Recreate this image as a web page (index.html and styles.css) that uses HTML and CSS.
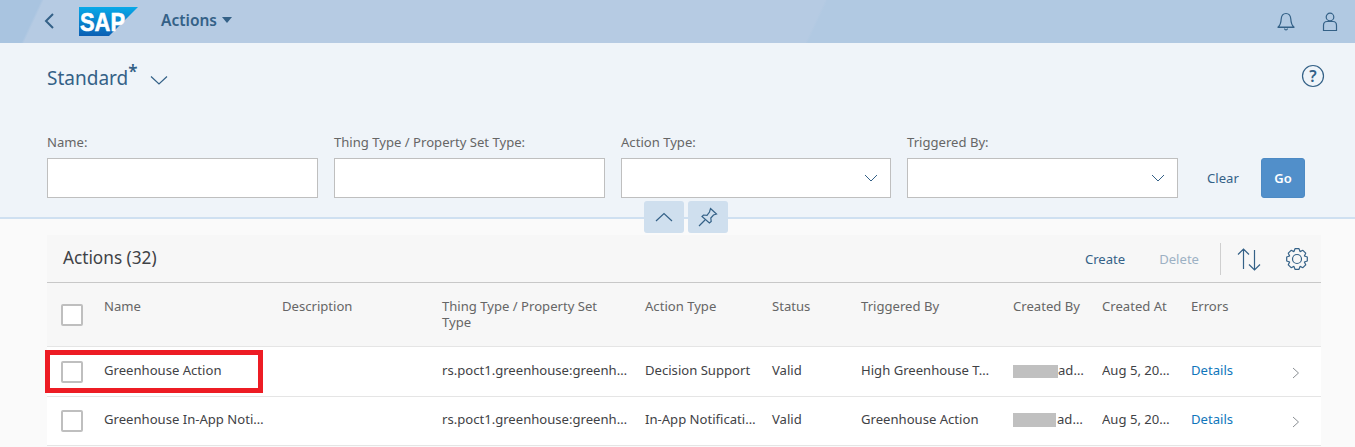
FILE: index.html
```html
<!DOCTYPE html>
<html lang="en">

<head>
  <meta charset="utf-8">
  <title>Actions</title>
  <link rel="stylesheet" href="styles.css">
</head>

<body>
  <header class="shell">
    <button class="back" aria-label="Back">
      <svg width="12" height="18" viewBox="0 0 12 18"><path d="M10 2 3 9l7 7" class="line thick"/></svg>
    </button>
    <svg class="logo" width="59" height="29" viewBox="0 0 59 29">
      <defs>
        <linearGradient id="sapBlue" x1="0" y1="0" x2="0" y2="1">
          <stop offset="0" stop-color="#08a9e8"/>
          <stop offset="1" stop-color="#0b5fb3"/>
        </linearGradient>
      </defs>
      <polygon points="0,0 59,0 30,29 0,29" fill="url(#sapBlue)"/>
      <text x="1" y="24" class="logo-text" textLength="45" lengthAdjust="spacingAndGlyphs">SAP</text>
    </svg>
    <div class="app-title">Actions <span class="caret"></span></div>
    <div class="shell-right">
      <svg width="18" height="20" viewBox="0 0 18 20"><path d="M9 1.500c-3.400 0-4.600 2.800-4.800 5.500-.2 3.500-.8 6-3 8h15.600c-2.200-2-2.800-4.500-3-8C13.600 4.300 12.400 1.500 9 1.500ZM1 15.500h16M7.500 16.500c.3 1.800 2.700 1.800 3 0" class="line"/></svg>
      <svg width="16" height="20" viewBox="0 0 16 20"><circle cx="8" cy="5" r="3.800" class="line"/><path d="M1.500 18.500v-5c0-2.500 1.500-4 3.500-4h6c2 0 3.500 1.500 3.500 4v5Z" class="line"/></svg>
    </div>
  </header>

  <section class="filterbar">
    <div class="variant-row">
      <div class="variant">Standard<sup class="star">*</sup>
        <svg class="variant-arrow" width="18" height="10" viewBox="0 0 18 10"><path d="M1 1.500 9 9l8-7.500" class="line"/></svg>
      </div>
      <svg class="help" width="24" height="24" viewBox="0 0 24 24"><circle cx="12" cy="12" r="10.500" class="line"/><text x="12" y="17.500" class="help-text">?</text></svg>
    </div>
    <div class="filters">
      <div class="field">
        <label>Name:</label>
        <div class="input"></div>
      </div>
      <div class="field">
        <label>Thing Type / Property Set Type:</label>
        <div class="input"></div>
      </div>
      <div class="field">
        <label>Action Type:</label>
        <div class="input">
          <svg width="14" height="8" viewBox="0 0 14 8"><path d="M1 1l6 6 6-6" class="line thin"/></svg>
        </div>
      </div>
      <div class="field">
        <label>Triggered By:</label>
        <div class="input">
          <svg width="14" height="8" viewBox="0 0 14 8"><path d="M1 1l6 6 6-6" class="line thin"/></svg>
        </div>
      </div>
      <span class="clear">Clear</span>
      <button class="go">Go</button>
    </div>
    <div class="bar-tools">
      <button class="tool">
        <svg width="18" height="10" viewBox="0 0 18 10"><path d="M1 9l8-7.500L17 9" class="line"/></svg>
      </button>
      <button class="tool">
        <svg width="20" height="20" viewBox="0 0 20 20"><path d="M1 19l6-6M12.500 1.500l6 5.500-3 1-2.700 3 .4 3.500-1.800 1.500L4 9.500 5.500 8l3.500.3L11.500 5Z" class="line"/></svg>
      </button>
    </div>
  </section>

  <main class="content">
    <div class="toolbar">
      <h2>Actions (32)</h2>
      <span class="action">Create</span>
      <span class="action off">Delete</span>
      <span class="sep"></span>
      <svg width="24" height="24" viewBox="0 0 24 24"><path d="M6.500 22V2M1 7.500l5.500-5.500L12 7.500M17.500 3v20M12 17.500l5.500 5.500 5.500-5.500" class="line"/></svg>
      <svg class="gear" width="24" height="24" viewBox="0 0 24 24"><circle cx="12" cy="12" r="4.500" class="line"/><polygon points="22.310,10 22.310,14 19.390,15.060 20.700,17.870 17.870,20.700 15.060,19.390 14,22.310 10,22.310 8.940,19.390 6.130,20.700 3.300,17.870 4.610,15.060 1.690,14 1.690,10 4.610,8.940 3.300,6.130 6.130,3.300 8.940,4.610 10,1.690 14,1.690 15.060,4.610 17.870,3.300 20.700,6.130 19.390,8.940" class="line round"/></svg>
    </div>

    <div class="row head">
      <div class="check-cell"><span class="check"></span></div>
      <div>Name</div>
      <div>Description</div>
      <div>Thing Type / Property Set Type</div>
      <div>Action Type</div>
      <div>Status</div>
      <div>Triggered By</div>
      <div>Created By</div>
      <div>Created At</div>
      <div>Errors</div>
      <div></div>
    </div>

    <div class="row item">
      <div class="check-cell"><span class="check"></span></div>
      <div>Greenhouse Action</div>
      <div></div>
      <div class="cut">rs.poct1.greenhouse:greenhouse</div>
      <div class="cut">Decision Support</div>
      <div>Valid</div>
      <div class="cut trigger">High Greenhouse Temperature</div>
      <div class="cut"><span class="hidden-name"></span>admin@sap.com</div>
      <div class="cut">Aug 5, 2020, 10:14 AM</div>
      <div><a class="link">Details</a></div>
      <div class="chev"><svg width="8" height="12" viewBox="0 0 8 12"><path d="M1 1l5.500 5L1 11" class="line grey"/></svg></div>
    </div>

    <div class="row item">
      <div class="check-cell"><span class="check"></span></div>
      <div class="cut">Greenhouse In-App Notification</div>
      <div></div>
      <div class="cut">rs.poct1.greenhouse:greenhouse</div>
      <div class="cut">In-App Notification</div>
      <div>Valid</div>
      <div class="cut trigger">Greenhouse Action</div>
      <div class="cut"><span class="hidden-name lower"></span>admin@sap.com</div>
      <div class="cut">Aug 5, 2020, 10:14 AM</div>
      <div><a class="link">Details</a></div>
      <div class="chev"><svg width="8" height="12" viewBox="0 0 8 12"><path d="M1 1l5.500 5L1 11" class="line grey"/></svg></div>
    </div>

    <div class="callout"></div>
  </main>
</body>

</html>
```

FILE: styles.css
```css
html,
body {
  margin: 0;
  height: 447px;
  overflow: hidden;
}

body {
  background-color: #fafafa;
  font-family: "Noto Sans", "Open Sans", sans-serif;
  font-size: 13.1px;
  color: #3f4246;
}

button {
  font-family: inherit;
  border: 0;
  padding: 0;
}

.line {
  fill: none;
  stroke: #346187;
  stroke-width: 1.2;
}

.thick {
  stroke-width: 2;
}

.thin {
  stroke-width: 1;
}

.grey {
  stroke: #8a8f94;
  stroke-width: 1;
}

.round {
  stroke-linejoin: round;
}

/* top bar */
.shell {
  height: 43px;
  display: flex;
  align-items: center;
  background: linear-gradient(115deg, #a9c4e0 0, #a9c4e0 3%, #b6cbe3 3.2%, #b6cbe3 60%, #b1c9e2 60.2%);
}

.back {
  background: none;
  margin-left: 42px;
  width: 14px;
  height: 18px;
  margin-top: -1px;
}

.logo {
  margin-left: 23px;
}

.logo-text {
  font-family: "Liberation Sans", sans-serif;
  font-weight: bold;
  font-size: 25px;
  fill: #fff;
  stroke: #fff;
  stroke-width: 0.6;
}

.app-title {
  margin-left: 23px;
  margin-top: -3px;
  font-size: 15.5px;
  font-weight: 600;
  color: #346187;
  display: flex;
  align-items: center;
  gap: 5px;
}

.caret {
  width: 0;
  height: 0;
  border-left: 5px solid transparent;
  border-right: 5px solid transparent;
  border-top: 6px solid #346187;
}

.shell-right {
  margin-left: auto;
  margin-right: 17px;
  display: flex;
  align-items: center;
  gap: 27px;
}

/* filter bar */
.filterbar {
  position: relative;
  height: 176px;
  box-sizing: border-box;
  background-color: #eff4f9;
  border-bottom: 2px solid #cfe0f1;
  padding: 20px 30px 0 47px;
}

.variant-row {
  display: flex;
  justify-content: space-between;
  height: 70px;
}

.variant {
  font-size: 19px;
  color: #346187;
  line-height: 30px;
  display: flex;
  align-items: flex-start;
}

.star {
  font-size: 17px;
  font-weight: 600;
  line-height: 18px;
  margin-left: 0;
}

.variant-arrow {
  margin: 12px 0 0 13px;
}

.help {
  margin-top: 1px;
}

.help-text {
  font-size: 16px;
  font-weight: 600;
  fill: #346187;
  text-anchor: middle;
}

.filters {
  display: flex;
  align-items: flex-end;
  gap: 16px;
}

.field {
  width: 271px;
}

.field:nth-child(3) {
  width: 270px;
}

.field label {
  display: block;
  color: #666;
  line-height: 18px;
  margin-bottom: 7px;
}

.input {
  height: 40px;
  box-sizing: border-box;
  background-color: #fff;
  border: 1px solid #bfbfbf;
  display: flex;
  align-items: center;
  justify-content: flex-end;
  padding-right: 12px;
}

.clear {
  color: #346187;
  margin-left: 13px;
  line-height: 40px;
  width: 38px;
}

.go {
  width: 44px;
  height: 40px;
  background-color: #518fca;
  border: 1px solid #4d8ac4;
  border-radius: 3px;
  color: #fff;
  font-size: 13px;
  font-weight: 600;
}

.bar-tools {
  position: absolute;
  left: 644px;
  top: 158px;
  display: flex;
  gap: 4px;
}

.tool {
  width: 40px;
  height: 32px;
  background-color: #cfdfee;
  border-radius: 3px;
  display: flex;
  align-items: center;
  justify-content: center;
}

/* table */
.content {
  position: relative;
  margin: 16px 34px 0 47px;
}

.toolbar {
  height: 48px;
  box-sizing: border-box;
  background-color: #f7f7f7;
  border-bottom: 1px solid #c8c8c8;
  display: flex;
  align-items: center;
  padding: 0 12px 0 16px;
}

.toolbar h2 {
  margin: -2px auto 0 0;
  font-size: 17.2px;
  font-weight: 400;
}

.action {
  color: #346187;
  margin-right: 34px;
}

.action.off {
  color: #9db1c4;
  margin-right: 21px;
}

.sep {
  width: 1px;
  height: 32px;
  background-color: #cfcfcf;
  margin-right: 16px;
}

.gear {
  margin-left: 24px;
}

.row {
  display: grid;
  grid-template-columns: 57px 178px 160px 203px 127px 89px 152px 89px 89px 90px 40px;
  border-bottom: 1px solid #e5e5e5;
}

.row > div {
  padding-right: 16px;
  min-width: 0;
}

.head {
  height: 64px;
  box-sizing: border-box;
  background-color: #f7f7f7;
  color: #666;
  padding-top: 15px;
  line-height: 16px;
}

.head > div {
  padding-right: 20px;
}

.head .check-cell {
  margin-top: 6px;
}

.item {
  height: 50px;
  box-sizing: border-box;
  align-items: center;
  background-color: #fff;
}

.item + .item {
  height: 49px;
}

.item > div {
  margin-bottom: 4px;
}

.item .check-cell,
.item .chev {
  margin-bottom: 0;
}

.check-cell {
  padding: 0 0 0 14px !important;
  display: flex;
}

.check {
  width: 22px;
  height: 22px;
  box-sizing: border-box;
  border: 2px solid #bfbfbf;
  border-radius: 2px;
  background-color: #fff;
}

.cut {
  overflow: hidden;
  white-space: nowrap;
  text-overflow: ellipsis;
}

.row > .trigger {
  padding-right: 21px;
}

.hidden-name {
  display: inline-block;
  width: 46px;
  height: 13px;
  margin-left: -1px;
  vertical-align: -3px;
  background-color: #c0c0c0;
}

.hidden-name.lower {
  width: 45px;
  height: 14px;
  margin: 0 1px 0 -2px;
}

.link {
  color: #0f76bb;
}

.chev {
  padding-right: 0 !important;
  display: flex;
  justify-content: flex-end;
  padding-top: 2px;
}

.chev svg {
  margin-right: 21px;
}

.callout {
  position: absolute;
  left: -2px;
  top: 115px;
  width: 218px;
  height: 43px;
  box-sizing: border-box;
  border: 5px solid #ed1c24;
}
```
